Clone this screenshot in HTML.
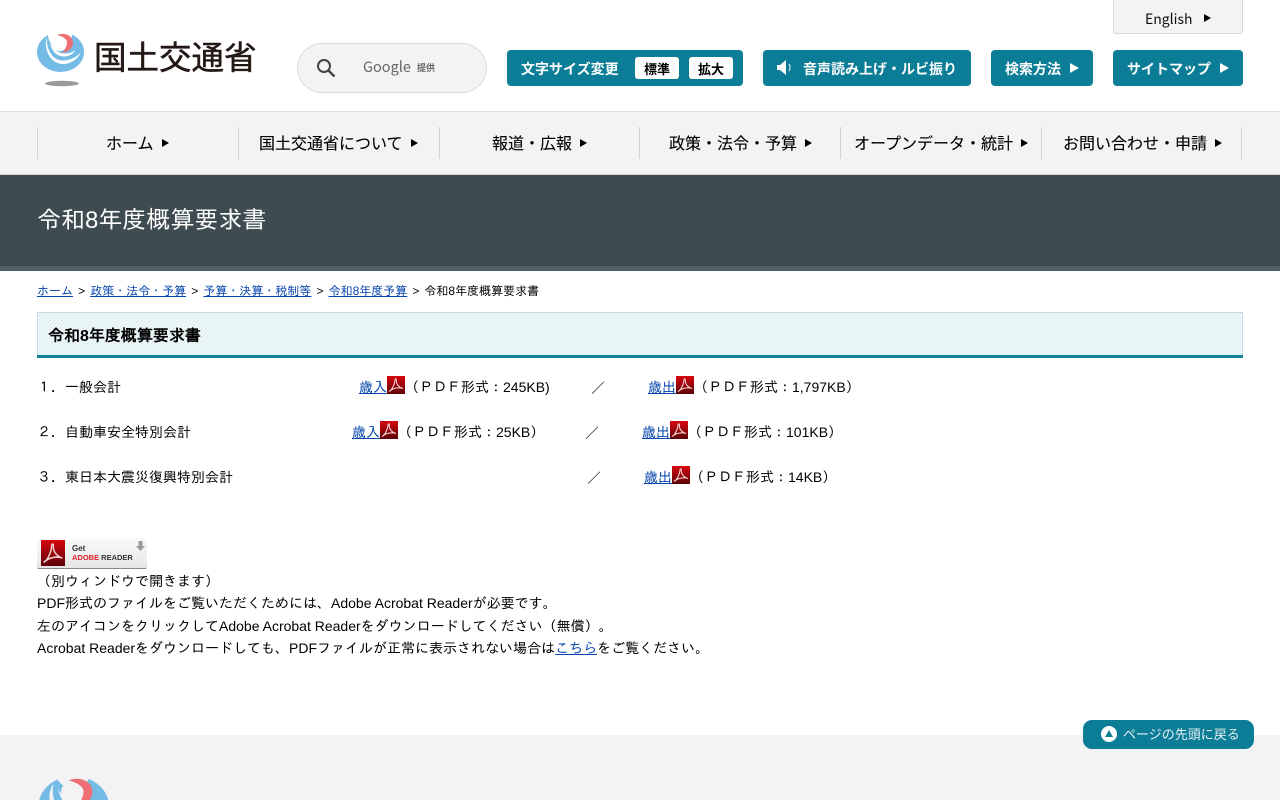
<!DOCTYPE html>
<html lang="ja">
<head>
<meta charset="utf-8">
<title>令和8年度概算要求書</title>
<style>
html,body{margin:0;padding:0;background:#fff;width:1280px;height:800px;overflow:hidden}
#w{position:relative;width:1280px;height:800px;overflow:hidden;font-family:"Liberation Sans","IPAGothic",sans-serif;font-size:14px;color:#000}
a{color:#0645ad}
.a{position:absolute;white-space:nowrap}
.n{font-family:"Noto Sans CJK JP",sans-serif}
.btn{position:absolute;top:50px;height:36px;background:#0c7d96;border-radius:4px;color:#fff;font-family:"Noto Sans CJK JP",sans-serif;font-size:14px;font-weight:700;line-height:38px;white-space:nowrap}
.tri{position:absolute;width:0;height:0;border-style:solid;border-width:5px 0 5px 9px;border-color:transparent transparent transparent #fff}
.navt{position:absolute;top:126px;height:32px;line-height:32px;font-family:"Noto Sans CJK JP",sans-serif;font-size:16px;white-space:nowrap;color:#000;-webkit-text-stroke:.1px #000}
.navtri{position:absolute;top:139px;width:0;height:0;border-style:solid;border-width:4px 0 4px 7px;border-color:transparent transparent transparent #000}
.sep{position:absolute;top:127px;width:1px;height:32px;background:#d2d2d2}
.r{position:absolute;line-height:20px;white-space:nowrap}
.pdf{position:absolute;width:18px;height:18px}
</style>
</head>
<body>
<div id="w">
<svg width="0" height="0" style="position:absolute"><defs>
<linearGradient id="pg" x1="0" y1="0" x2="0" y2="1"><stop offset="0" stop-color="#d8060f"/><stop offset="1" stop-color="#5a0308"/></linearGradient>
<pattern id="h" width="4" height="4" patternUnits="userSpaceOnUse"><rect width="4" height="4" fill="#dff0f2"/><path d="M-1 1L1 -1M0 4L4 0M3 5L5 3" stroke="#fff" stroke-width=".9"/></pattern>
<symbol id="pd" viewBox="0 0 18 18"><rect width="18" height="18" fill="url(#pg)"/><path d="M2 15.500C5 14 7.500 9 8 4c.2-1.800 1.500-1.500 1.300.5C9 7 11 11 16 12.500 12 11 6 12 2 15.500Z" fill="none" stroke="#f3d0d0" stroke-width="1.100"/></symbol>
</defs></svg>

<!-- Header -->
<svg class="a" style="left:36px;top:32px" width="50" height="56" viewBox="0 0 50 56">
<ellipse cx="24.500" cy="20" rx="23.500" ry="20" fill="#74bbe6"/>
<path d="M12 3A12 12 0 0 1 36 3 12 12 0 0 1 12 3Z" fill="#fff"/>
<path d="M11 5C7 16 14 32 27 32 35 32 42 27 45 20 40 26 33 28.500 27 28.500 16 28.500 10 17 11 5Z" fill="#fff"/>
<path d="M14 8C14 16 19 24.500 28 24.500 33 24.500 37 22 40 18 36 20.500 33 21.500 29 21.500 21 21.500 16 15 14 8Z" fill="#fff"/>
<circle cx="24" cy="11" r="8" fill="#fff"/>
<path d="M21 3C28 0 37 3 37 11 37 16 32 20 26 21 29 18 31 14 31 10 31 7 26 4 21 3Z" fill="#ec7075"/>
<ellipse cx="26" cy="51.500" rx="17" ry="2.700" fill="#9a9a9a"/>
</svg>
<div class="a n" style="left:94px;top:33px;font-size:32.500px;line-height:46px;color:#231815;-webkit-text-stroke:.5px #231815">国土交通省</div>

<div class="a" style="left:297px;top:43px;width:188px;height:48px;background:#f3f3f3;border:1px solid #dcdcdc;border-radius:25px"></div>
<svg class="a" style="left:316px;top:58px" width="20" height="20" viewBox="0 0 20 20"><circle cx="8" cy="8" r="6" fill="none" stroke="#444" stroke-width="2"/><path d="M12.500 12.500L18.500 18.500" stroke="#444" stroke-width="2.400"/></svg>
<div class="a n" style="left:363px;top:56px;font-size:14.500px;line-height:22px;color:#666">Google</div>
<div class="a n" style="left:417px;top:61px;font-size:9px;line-height:14px;font-weight:700;color:#666">提供</div>

<div class="a" style="left:1113px;top:0;width:128px;height:33px;background:#f3f3f3;border:1px solid #d8d8d8;border-top:0;border-radius:0 0 3px 3px"></div>
<div class="a n" style="left:1145px;top:9px;font-size:14px;line-height:20px;color:#111">English</div>
<div class="a" style="left:1204px;top:14px;width:0;height:0;border-style:solid;border-width:4px 0 4px 7px;border-color:transparent transparent transparent #000"></div>

<div class="btn" style="left:507px;width:236px"><span class="a" style="left:14px">文字サイズ変更</span>
<span class="a" style="left:128px;top:7px;width:44px;height:22px;background:#fff;border-radius:3px;color:#000;text-align:center;line-height:23px;font-size:13px">標準</span>
<span class="a" style="left:182px;top:7px;width:44px;height:22px;background:#fff;border-radius:3px;color:#000;text-align:center;line-height:23px;font-size:13px">拡大</span></div>
<div class="btn" style="left:763px;width:208px">
<svg class="a" style="left:13px;top:9px" width="20" height="18" viewBox="0 0 20 18"><path d="M1 6h3l6-5v15l-6-5H1Z" fill="#fff"/><path d="M13 5c1.500 2 1.500 5 0 7" fill="none" stroke="#fff" stroke-width="1"/></svg>
<span class="a" style="left:40px">音声読み上げ・ルビ振り</span></div>
<div class="btn" style="left:991px;width:102px"><span class="a" style="left:14px">検索方法</span><span class="tri" style="left:79px;top:13px"></span></div>
<div class="btn" style="left:1113px;width:130px"><span class="a" style="left:14px">サイトマップ</span><span class="tri" style="left:107px;top:13px"></span></div>

<!-- Nav -->
<div class="a" style="left:0;top:111px;width:1280px;height:62px;background:#f3f3f3;border-top:1px solid #dcdcdc;border-bottom:1px solid #d4d4d4"></div>
<div class="sep" style="left:37px"></div><div class="sep" style="left:238px"></div><div class="sep" style="left:439px"></div><div class="sep" style="left:639px"></div><div class="sep" style="left:840px"></div><div class="sep" style="left:1041px"></div><div class="sep" style="left:1241px"></div>
<div class="navt" style="left:106px">ホーム</div><div class="navtri" style="left:162px"></div>
<div class="navt" style="left:259px">国土交通省について</div><div class="navtri" style="left:411px"></div>
<div class="navt" style="left:492px">報道・広報</div><div class="navtri" style="left:580px"></div>
<div class="navt" style="left:669px">政策・法令・予算</div><div class="navtri" style="left:805px"></div>
<div class="navt" style="left:854px">オープンデータ・統計</div><div class="navtri" style="left:1021px"></div>
<div class="navt" style="left:1063px">お問い合わせ・申請</div><div class="navtri" style="left:1215px"></div>

<!-- Title band -->
<div class="a" style="left:0;top:175px;width:1280px;height:91px;background:#3e4b51"></div>
<div class="a" style="left:0;top:266px;width:1280px;height:5px;background:#515f66"></div>
<div class="a" style="left:37px;top:205px;font-size:24px;line-height:32px;color:#fff">令和8年度概算要求書</div>

<!-- Breadcrumb -->
<div class="a" style="left:37px;top:282px;font-size:12px;line-height:18px;word-spacing:1.750px"><a href="#">ホーム</a> &gt; <a href="#">政策・法令・予算</a> &gt; <a href="#">予算・決算・税制等</a> &gt; <a href="#">令和8年度予算</a> &gt; 令和8年度概算要求書</div>

<!-- Heading -->
<svg class="a" style="left:37px;top:312px" width="1206" height="43"><path d="M.5 43V.5H1205.500V43" fill="url(#h)" stroke="#c5dde1"/></svg>
<div class="a" style="left:37px;top:355px;width:1206px;height:3px;background:#0e8299"></div>
<div class="a" style="left:48px;top:325px;font-size:16px;line-height:24px;font-weight:bold">令和8年度概算要求書</div>

<!-- Rows -->
<div class="r" style="left:37px;top:377px">１．一般会計</div>
<div class="r" style="left:359px;top:377px"><a href="#">歳入</a></div>
<svg class="pdf" style="left:387px;top:376px"><use href="#pd"/></svg>
<div class="r" style="left:405px;top:377px">（ＰＤＦ形式：245KB)</div>
<div class="r" style="left:591px;top:378px">／</div>
<div class="r" style="left:648px;top:377px"><a href="#">歳出</a></div>
<svg class="pdf" style="left:676px;top:376px"><use href="#pd"/></svg>
<div class="r" style="left:694px;top:377px">（ＰＤＦ形式：1,797KB）</div>

<div class="r" style="left:37px;top:422px">２．自動車安全特別会計</div>
<div class="r" style="left:352px;top:422px"><a href="#">歳入</a></div>
<svg class="pdf" style="left:380px;top:421px"><use href="#pd"/></svg>
<div class="r" style="left:398px;top:422px">（ＰＤＦ形式：25KB）</div>
<div class="r" style="left:585px;top:423px">／</div>
<div class="r" style="left:642px;top:422px"><a href="#">歳出</a></div>
<svg class="pdf" style="left:670px;top:421px"><use href="#pd"/></svg>
<div class="r" style="left:688px;top:422px">（ＰＤＦ形式：101KB）</div>

<div class="r" style="left:37px;top:467px">３．東日本大震災復興特別会計</div>
<div class="r" style="left:587px;top:468px">／</div>
<div class="r" style="left:644px;top:467px"><a href="#">歳出</a></div>
<svg class="pdf" style="left:672px;top:466px"><use href="#pd"/></svg>
<div class="r" style="left:690px;top:467px">（ＰＤＦ形式：14KB）</div>

<!-- Adobe badge -->
<div class="a" style="left:37px;top:538px;width:110px;height:31px;background:linear-gradient(#fafafa,#e6e6e6);border-bottom:1px solid #888;border-radius:2px;box-sizing:border-box"></div>
<svg class="a" style="left:41px;top:540px" width="24" height="26" viewBox="0 0 18 18" preserveAspectRatio="none"><use href="#pd"/></svg>
<div class="a" style="left:72px;top:544px;font-size:8px;line-height:10px;font-weight:bold;color:#333">Get</div>
<div class="a" style="left:72px;top:553px;font-size:7.500px;line-height:9px;font-weight:bold;color:#e0202a">ADOBE<span style="color:#333"> READER</span></div>
<svg class="a" style="left:136px;top:541px" width="9" height="10" viewBox="0 0 9 10"><path d="M2.500 0h4v5H9L4.500 10 0 5h2.500Z" fill="#999"/></svg>

<div class="a" style="left:37px;top:570px;line-height:22.300px">（別ウィンドウで開きます）<br>PDF形式のファイルをご覧いただくためには、Adobe Acrobat Readerが必要です。<br>左のアイコンをクリックしてAdobe Acrobat Readerをダウンロードしてください（無償）。<br>Acrobat Readerをダウンロードしても、PDFファイルが正常に表示されない場合は<a href="#">こちら</a>をご覧ください。</div>

<!-- Footer -->
<div class="a" style="left:0;top:735px;width:1280px;height:65px;background:#f3f3f3"></div>
<svg class="a" style="left:37px;top:776px" width="75" height="24" viewBox="0 0 50 16">
<path d="M1.500 16A23.500 20 0 0 1 47.500 16Z" fill="#74bbe6"/>
<path d="M12.600 0H35.400A12 12 0 0 1 12.600 0Z" fill="#f3f3f3"/>
<path d="M11 5C10 9 10.500 13 11.500 16H8.500C7.800 12 9 8 11 5Z" fill="#f3f3f3"/>
<path d="M14 8C14.300 11 15.500 13.500 17 16H19.500C17 13.500 15 11 14 8Z" fill="#f3f3f3"/>
<path d="M17.760 16A8 8 0 1 1 30.240 16Z" fill="#f3f3f3"/>
<path d="M21 3C28 0 37 3 37 11 37 13 36 14.500 35 16H29.500C30.500 14 31 12 31 10 31 7 26 4 21 3Z" fill="#ec7075"/>
</svg>
<div class="a n" style="left:1083px;top:720px;width:171px;height:29px;background:#0c7d96;border-radius:9px;color:#fff;font-size:13px;line-height:28px"><span class="a" style="left:40px;color:#e3eff3">ページの先頭に戻る</span>
<span class="a" style="left:18px;top:6px;width:16px;height:16px;border-radius:50%;background:#fff"></span>
<span class="a" style="left:22px;top:10px;width:0;height:0;border-style:solid;border-width:0 4px 7px 4px;border-color:transparent transparent #0c7d96 transparent"></span></div>
</div>
</body>
</html>
